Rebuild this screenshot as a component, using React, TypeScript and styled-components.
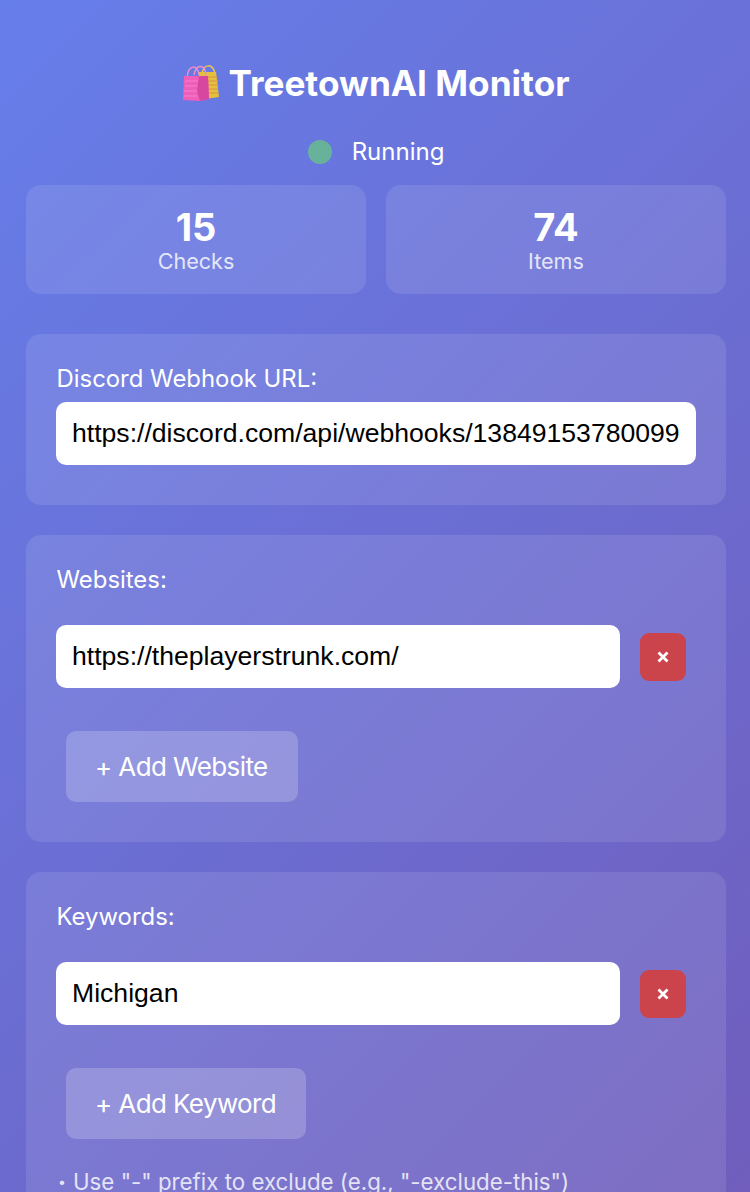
import React from 'react'
import styled, { createGlobalStyle } from 'styled-components'

const GlobalStyle = createGlobalStyle`
	html, body {
		margin: 0;
		padding: 0;
		height: 1192px;
		overflow: hidden;
	}
	body {
		font-family: Inter, "Noto Sans", sans-serif;
		color: #fff;
	}
	* {
		box-sizing: border-box;
	}
`

const Page = styled.div`
	height: 1192px;
	overflow: hidden;
	background: linear-gradient(135deg, #667eea 0%, #764ba2 100%) top left / 750px 2300px no-repeat;
	padding: 0 24px 0 26px;
`

const Title = styled.h1`
	display: flex;
	justify-content: center;
	align-items: center;
	gap: 9px;
	margin: 0;
	padding-top: 42px;
	height: 124px;
	font-size: 35.2px;
	line-height: 42px;
	font-weight: 700;
`

const StatusRow = styled.div`
	display: flex;
	justify-content: center;
	align-items: center;
	gap: 20px;
	height: 61px;
	padding-bottom: 6px;
	font-size: 24px;
`

const StatusDot = styled.span`
	width: 24px;
	height: 24px;
	border-radius: 50%;
	background: #68b29b;
`

const StatsGrid = styled.div`
	display: grid;
	grid-template-columns: 1fr 1fr;
	gap: 20px;
	margin-bottom: 40px;
`

const StatCard = styled.div`
	height: 109px;
	padding-top: 22px;
	border-radius: 15px;
	background: rgba(255, 255, 255, 0.1);
	text-align: center;
`

const StatNumber = styled.div`
	font-size: 38px;
	line-height: 41px;
	font-weight: 700;
`

const StatLabel = styled.div`
	font-size: 21.6px;
	line-height: 26px;
	opacity: 0.8;
`

const Section = styled.section`
	margin-bottom: 30px;
	padding: 30px 30px 40px;
	border-radius: 15px;
	background: rgba(255, 255, 255, 0.1);
`

const Label = styled.label<{ $gap: number }>`
	display: block;
	margin-bottom: ${(props) => props.$gap}px;
	padding-left: 0.5px;
	font-size: 23.9px;
	line-height: 30px;
`

const Row = styled.div`
	display: flex;
	align-items: center;
	gap: 20px;
	margin-bottom: 43px;
`

const TextInput = styled.input<{ $full?: boolean }>`
	display: block;
	width: ${(props) => (props.$full ? '640px' : '564px')};
	height: 63px;
	padding: 0 16px;
	border: 0;
	border-radius: 10px;
	outline: 0;
	background: #fff;
	color: #000;
	font-family: "Liberation Sans", Arial, sans-serif;
	font-size: 26.6px;
`

const RemoveButton = styled.button`
	display: flex;
	align-items: center;
	justify-content: center;
	width: 46px;
	height: 48px;
	padding: 0;
	border: 0;
	border-radius: 9px;
	background: #cc444b;
`

const AddButton = styled.button`
	display: block;
	height: 71px;
	margin-left: 10px;
	padding: 0 30px 0 29px;
	border: 0;
	border-radius: 10px;
	background: rgba(255, 255, 255, 0.2);
	color: #fff;
	font-family: Inter, sans-serif;
	font-size: 26px;
	letter-spacing: -0.6px;
`

const Hint = styled.div`
	display: flex;
	align-items: center;
	margin-top: 30px;
	font-size: 22.3px;
	line-height: 26px;
	white-space: nowrap;
	opacity: 0.8;
`

const HintBullet = styled.span`
	width: 17px;
	padding-left: 2px;
	font-size: 14px;
`

const BagsIcon = () => (
	<svg width="37" height="37" viewBox="0 0 37 37">
		<path d="M20 10c1-12 11-12 13-1" fill="none" stroke="#edc653" strokeWidth="1.5" />
		<path d="M17 7h17l3 25-14 2-6-8z" fill="#e3c13a" />
		<path d="M25 12h10M25 16h11M25 20h11M25 24h11M25 28h11" stroke="#dfa048" strokeWidth="1.5" />
		<path d="M5 13c1-14 11-14 12-3M12 10c2-12 12-11 12 1" fill="none" stroke="#ee8fc6" strokeWidth="1.500" />
		<path d="M2 11h24l1 23-9 2-17-1z" fill="#ef5fb9" />
		<path d="M17 11h9l1 23-9 2-3-10z" fill="#d8479f" />
		<path d="M3 16h13M3 21h12M2 26h13M2 31h13" stroke="#f582cb" strokeWidth="1.200" />
	</svg>
)

const RemoveIcon = () => (
	<svg width="12" height="12" viewBox="0 0 12 12">
		<path d="M1.500 1.500l9 9M10.500 1.500l-9 9" stroke="#fff" strokeWidth="2.800" />
	</svg>
)

const App: React.FC = () => {
	return (
		<Page>
			<GlobalStyle />
			<Title>
				<BagsIcon />
				TreetownAI Monitor
			</Title>
			<StatusRow>
				<StatusDot />
				Running
			</StatusRow>
			<StatsGrid>
				<StatCard>
					<StatNumber>15</StatNumber>
					<StatLabel>Checks</StatLabel>
				</StatCard>
				<StatCard>
					<StatNumber>74</StatNumber>
					<StatLabel>Items</StatLabel>
				</StatCard>
			</StatsGrid>
			<Section>
				<Label $gap={8}>Discord Webhook URL:</Label>
				<TextInput $full readOnly value="https://discord.com/api/webhooks/13849153780099123456/abcdefgh" />
			</Section>
			<Section>
				<Label $gap={30}>Websites:</Label>
				<Row>
					<TextInput readOnly value="https://theplayerstrunk.com/" />
					<RemoveButton>
						<RemoveIcon />
					</RemoveButton>
				</Row>
				<AddButton>+ Add Website</AddButton>
			</Section>
			<Section>
				<Label $gap={30}>Keywords:</Label>
				<Row>
					<TextInput readOnly value="Michigan" />
					<RemoveButton>
						<RemoveIcon />
					</RemoveButton>
				</Row>
				<AddButton>+ Add Keyword</AddButton>
				<Hint>
					<HintBullet>•</HintBullet>
					Use "-" prefix to exclude (e.g., "-exclude-this")
				</Hint>
			</Section>
		</Page>
	)
}

export default App
